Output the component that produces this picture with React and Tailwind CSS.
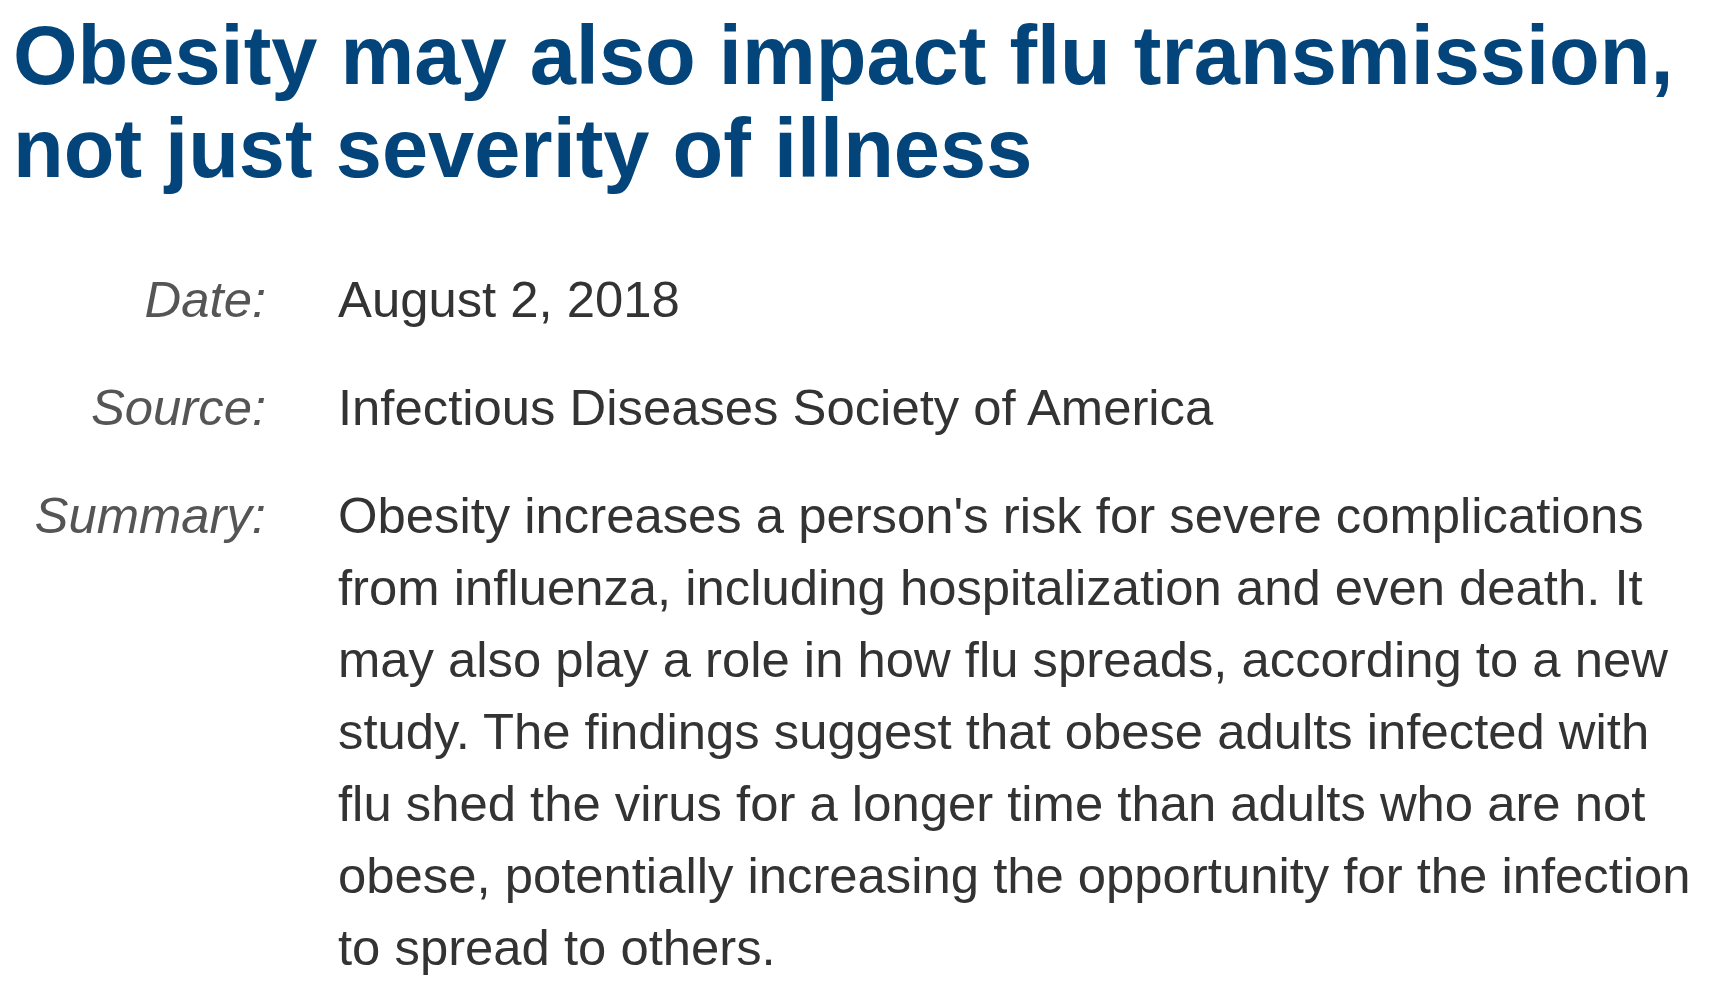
import React from "react";

const meta = [
  { label: "Date:", value: "August 2, 2018" },
  { label: "Source:", value: "Infectious Diseases Society of America" },
  {
    label: "Summary:",
    value:
      "Obesity increases a person's risk for severe complications from influenza, including hospitalization and even death. It may also play a role in how flu spreads, according to a new study. The findings suggest that obese adults infected with flu shed the virus for a longer time than adults who are not obese, potentially increasing the opportunity for the infection to spread to others.",
  },
];

export default function App() {
  return (
    <div className="min-h-screen bg-white pl-[13px] pr-[8px] pt-[9px] font-['Liberation_Sans',Arial,sans-serif]">
      {/* Headline */}
      <h1 className="text-[83px] font-bold leading-[93px] text-[#03457a]">
        Obesity may also impact flu transmission, not just severity of illness
      </h1>

      {/* Story details */}
      <dl className="mt-[69px] grid grid-cols-[253px_1fr] gap-x-[72px] gap-y-[36px] text-[50.8px] leading-[72px]">
        {meta.map((m) => (
          <React.Fragment key={m.label}>
            <dt className="text-right italic text-[#555555]">{m.label}</dt>
            <dd className="text-[#333333]">{m.value}</dd>
          </React.Fragment>
        ))}
      </dl>
    </div>
  );
}
